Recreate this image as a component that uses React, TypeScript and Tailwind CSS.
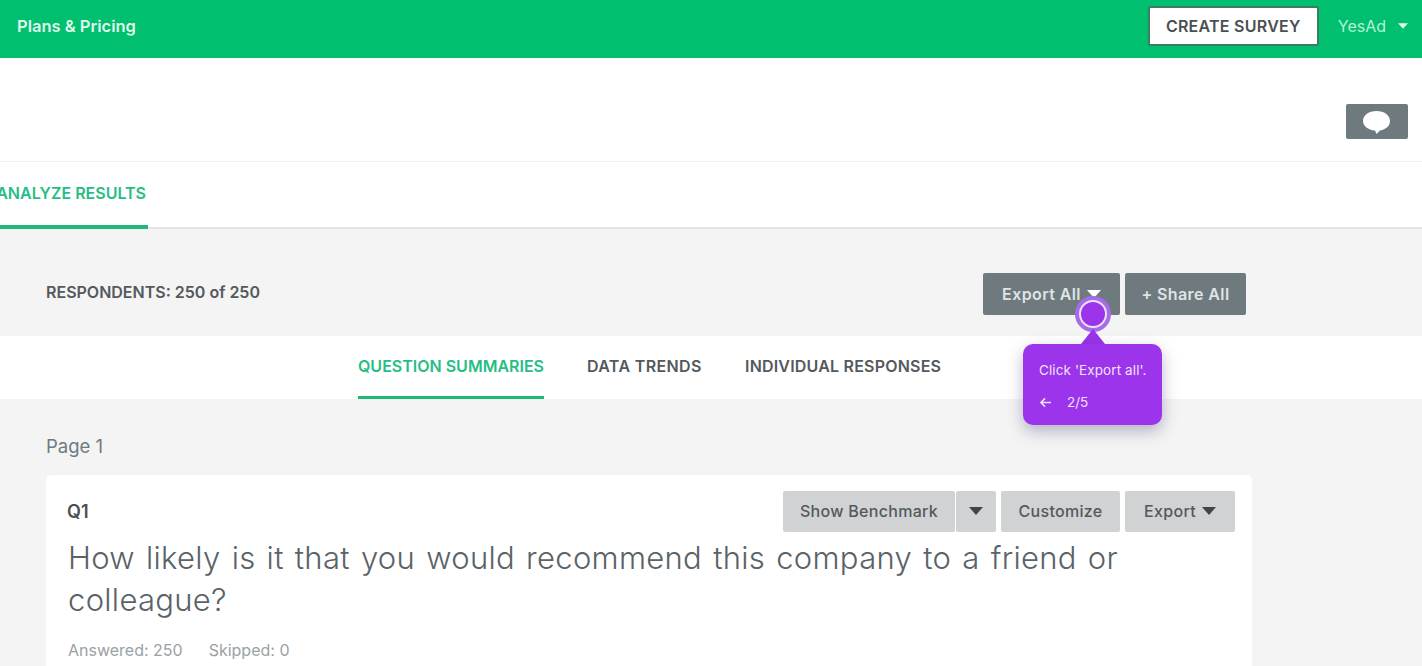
import React from "react";

const Caret = ({ className }: { className: string }) => (
  <svg viewBox="0 0 14 8" className={className} fill="currentColor">
    <path d="M0 0h14L7 8z" />
  </svg>
);

const GrayBtn = ({ children, className = "" }: { children: React.ReactNode; className?: string }) => (
  <div className={`h-[41px] pb-px bg-[#d0d2d3] rounded-[2px] flex items-center justify-center text-[16px] font-medium text-[#53595d] tracking-[0.3px] ${className}`}>
    {children}
  </div>
);

export default function App() {
  return (
    <div className="relative w-[1422px] h-[666px] overflow-hidden bg-[#f4f4f4] font-['Inter','Noto_Sans',sans-serif]">
      <header className="h-[58px] bg-[#00bf6f] flex items-center pl-[17px] pr-[14px] pb-[7px]">
        <span className="mt-[2px] text-[16.5px] font-semibold text-[#dff8ec]">Plans &amp; Pricing</span>
        <div className="ml-auto flex items-center">
          <div className="w-[171px] h-[40px] bg-white border-2 border-[#3b7f63] rounded-[2px] flex items-center justify-center text-[16px] font-semibold text-[#4b4f52] tracking-[0.25px]">
            CREATE SURVEY
          </div>
          <span className="ml-[19px] text-[16px] text-[#b5f2d5]">YesAd</span>
          <Caret className="ml-[12px] w-[10px] h-[6px] text-[#d8f8e8]" />
        </div>
      </header>

      <div className="h-[104px] bg-white border-b border-[#eff0f0] flex items-center justify-end pr-[14px]">
        <div className="mt-[23px] w-[62px] h-[35px] bg-[#6f7a7e] rounded-[2px] flex items-center justify-center">
          <svg viewBox="0 0 27 23" className="w-[27px] h-[23px] mt-[2px] -ml-[2px]" fill="#fff">
            <path d="M13.500 0C21 0 27 4 27 10c0 5-4 8.500-10 9.500L13.500 23 12 19.500C5 19 0 15 0 10 0 4 6 0 13.500 0z" />
          </svg>
        </div>
      </div>

      <div className="h-[67px] bg-white border-b-2 border-[#e3e5e5] flex items-stretch">
        <div className="w-[148px] -mb-[2px] border-b-[4px] border-[#1fb877] flex items-center justify-end pr-[2px] pb-[2px] overflow-hidden">
          <span className="text-[16px] font-semibold text-[#27bd83] whitespace-nowrap">ANALYZE RESULTS</span>
        </div>
      </div>

      <div className="h-[107px] flex items-center pl-[46px] pr-[176px] pt-[20px]">
        <span className="-mt-[2px] text-[16px] font-semibold text-[#53595d] whitespace-nowrap">RESPONDENTS: 250 of 250</span>
        <div className="ml-auto flex gap-[5px] mt-[2px]">
          <div className="w-[137px] h-[42px] bg-[#6f7a7e] rounded-[2px] flex items-center justify-center gap-[6px] text-[16px] font-semibold text-[#dfe4e5] tracking-[0.4px]">
            Export All
            <Caret className="w-[14px] h-[8px] text-white" />
          </div>
          <div className="w-[121px] h-[42px] bg-[#6f7a7e] rounded-[2px] flex items-center justify-center text-[16px] font-semibold text-[#dfe4e5] tracking-[0.4px]">
            + Share All
          </div>
        </div>
      </div>

      <nav className="h-[63px] bg-white flex justify-start pl-[358px] gap-[43px] text-[16px] font-semibold">
        <div className="w-[186px] border-b-[3px] border-[#1fb877] text-[#27bd83] flex items-center whitespace-nowrap">QUESTION SUMMARIES</div>
        <div className="w-[115px] text-[#53595d] flex items-center pb-[3px] whitespace-nowrap tracking-[0.35px]">DATA TRENDS</div>
        <div className="text-[#53595d] flex items-center pb-[3px] whitespace-nowrap tracking-[0.2px]">INDIVIDUAL RESPONSES</div>
      </nav>

      <div className="pl-[46px] pt-[34px] text-[18.5px] leading-[26px] text-[#6f7a7e]">Page 1</div>

      <section className="ml-[46px] mt-[16px] w-[1206px] h-[300px] bg-white rounded-[5px] pl-[21px] pr-[17px] pt-[16px]">
        <div className="flex items-center">
          <span className="text-[18px] font-semibold text-[#4b4f52]">Q1</span>
          <div className="ml-auto flex">
            <GrayBtn className="w-[172px]">Show Benchmark</GrayBtn>
            <GrayBtn className="w-[40px] ml-px">
              <Caret className="w-[14px] h-[8px] text-[#3f4447]" />
            </GrayBtn>
            <GrayBtn className="w-[119px] ml-[5px]">Customize</GrayBtn>
            <GrayBtn className="w-[110px] ml-[5px] gap-[6px]">
              Export
              <Caret className="w-[14px] h-[8px] text-[#3f4447]" />
            </GrayBtn>
          </div>
        </div>
        <h1 className="ml-px mt-[5px] w-[1080px] text-[31px] leading-[42px] font-light text-[#5a6368] tracking-[0.3px] [word-spacing:2.1px]">
          How likely is it that you would recommend this company to a friend or colleague?
        </h1>
        <div className="ml-px mt-[17px] flex gap-[26px] text-[16px] text-[#9aa1a5]">
          <span>Answered: 250</span>
          <span>Skipped: 0</span>
        </div>
      </section>

      {/* Walkthrough beacon and tooltip */}
      <div className="absolute left-[1075px] top-[296px] w-[36px] h-[36px] rounded-full border-[4px] border-[#a56be8] bg-[#ece2f8] p-[2px]">
        <div className="w-full h-full rounded-full bg-[#9b34ea]" />
      </div>
      <div className="absolute left-[1081px] top-[329px] w-0 h-0 border-x-[12px] border-x-transparent border-b-[15px] border-b-[#9b34ea]" />
      <div className="absolute left-[1023px] top-[344px] w-[139px] h-[81px] rounded-[10px] bg-[#9b34ea] shadow-[0_6px_16px_rgba(60,50,110,0.35)] pl-[16px] pt-[17px] text-[#f2e2fc]">
        <div className="text-[13.5px] leading-[18px] whitespace-nowrap tracking-[0.1px]">Click 'Export all'.</div>
        <div className="mt-[14px] flex items-center text-[13.5px] leading-[18px]">
          <svg viewBox="0 0 14 12" className="w-[13px] h-[11px]" fill="none" stroke="currentColor" strokeWidth="1.7">
            <path d="M13 6H2M6.500 1.500 2 6l4.500 4.500" />
          </svg>
          <span className="ml-[15px]">2/5</span>
        </div>
      </div>
    </div>
  );
}
